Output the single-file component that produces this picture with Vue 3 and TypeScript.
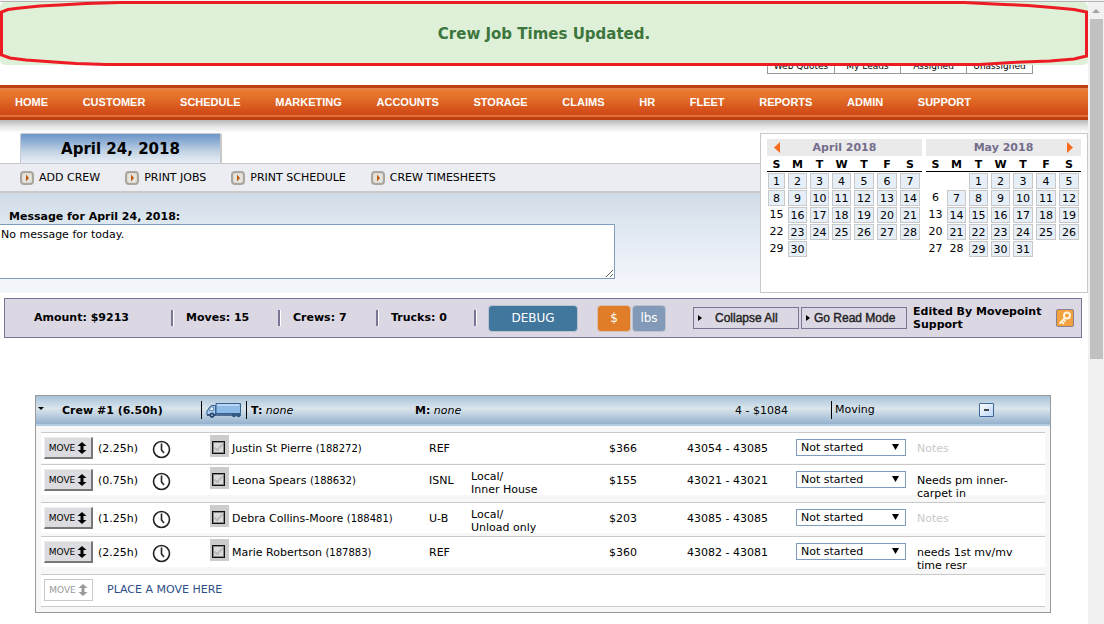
<script setup lang="ts">
interface Month {
  name: string
  offset: number
  days: number
  plain: number[]
  arrow: 'prev' | 'next'
}
interface Move {
  hours: string
  customer: string
  id: string
  code: string
  location: string[]
  amount: string
  range: string
  notes: string
}

const tabs = ['Web Quotes', 'My Leads', 'Assigned', 'Unassigned']
const menu = ['HOME', 'CUSTOMER', 'SCHEDULE', 'MARKETING', 'ACCOUNTS', 'STORAGE', 'CLAIMS', 'HR', 'FLEET', 'REPORTS', 'ADMIN', 'SUPPORT']
const actions = ['ADD CREW', 'PRINT JOBS', 'PRINT SCHEDULE', 'CREW TIMESHEETS']
const weekdays = ['S', 'M', 'T', 'W', 'T', 'F', 'S']
const months: Month[] = [
  { name: 'April 2018', offset: 0, days: 30, plain: [15, 22, 29], arrow: 'prev' },
  { name: 'May 2018', offset: 2, days: 31, plain: [6, 13, 20, 27, 28], arrow: 'next' },
]
const moves: Move[] = [
  { hours: '(2.25h)', customer: 'Justin St Pierre', id: '(188272)', code: 'REF', location: [], amount: '$366', range: '43054 - 43085', notes: '' },
  { hours: '(0.75h)', customer: 'Leona Spears', id: '(188632)', code: 'ISNL', location: ['Local/', 'Inner House'], amount: '$155', range: '43021 - 43021', notes: 'Needs pm inner-carpet in' },
  { hours: '(1.25h)', customer: 'Debra Collins-Moore', id: '(188481)', code: 'U-B', location: ['Local/', 'Unload only'], amount: '$203', range: '43085 - 43085', notes: '' },
  { hours: '(2.25h)', customer: 'Marie Robertson', id: '(187883)', code: 'REF', location: [], amount: '$360', range: '43082 - 43081', notes: 'needs 1st mv/mv time resr' },
]

function weeks(m: Month): (number | null)[][] {
  const rows: (number | null)[][] = []
  for (let start = 1 - m.offset; start <= m.days; start += 7) {
    rows.push(Array.from({ length: 7 }, (_, i) => {
      const day = start + i
      return day >= 1 && day <= m.days ? day : null
    }))
  }
  return rows
}
</script>

<template>
  <div class="page">
    <main class="content">
      <header class="top">
        <nav class="tabs" aria-label="Leads">
          <a v-for="t in tabs" :key="t" href="#">{{ t }}</a>
        </nav>
        <div class="banner" role="status">
          Crew Job Times Updated.
          <svg class="mark mark-left" viewBox="0 0 124 66" aria-hidden="true">
            <path d="M124 2.500H120L86 3.500L60 5L40 6L20 8L8 9.500L1.500 12V55L10 58L26 60L54 62L76 63.500L106 64.500H124" />
          </svg>
          <span class="mark-lines"></span>
          <svg class="mark mark-right" viewBox="0 0 124 66" aria-hidden="true">
            <path d="M0 2.500L20 3.500L40 4.500L64 5.500L88 7.500L110 9.500L122.500 12V56L110 59L86 61L48 62.500L16 64.500H0" />
          </svg>
        </div>
      </header>

      <nav class="menu" aria-label="Main">
        <a v-for="m in menu" :key="m" href="#">{{ m }}</a>
      </nav>
      <div class="menu-shadow"></div>

      <section class="day">
        <div class="day-main">
          <h1 class="date">April 24, 2018</h1>
          <div class="actions">
            <a v-for="a in actions" :key="a" href="#">
              <svg width="14" height="14" viewBox="0 0 14 14" aria-hidden="true">
                <rect x="1" y="1" width="12" height="12" rx="3" fill="#dedad4" stroke="#aaa69f" stroke-width="2" />
                <rect x="3" y="3" width="8" height="8" fill="#e6e2dc" />
                <path d="M6 3.500V10.500L9 7Z" fill="#bd5b12" />
              </svg>
              {{ a }}
            </a>
          </div>
          <div class="message">
            <label for="message">Message for April 24, 2018:</label>
            <textarea id="message">No message for today.</textarea>
          </div>
        </div>

        <div class="calendars">
          <div v-for="m in months" :key="m.name" class="month">
            <div class="month-head">
              <button type="button" :class="['arrow', m.arrow]" :aria-label="m.arrow === 'prev' ? 'Previous month' : 'Next month'"></button>
              {{ m.name }}
            </div>
            <table>
              <thead>
                <tr><th v-for="(w, i) in weekdays" :key="i" scope="col">{{ w }}</th></tr>
              </thead>
              <tbody>
                <tr v-for="(week, r) in weeks(m)" :key="r">
                  <td v-for="(d, i) in week" :key="i">
                    <a v-if="d" href="#" :class="{ plain: m.plain.includes(d) }">{{ d }}</a>
                  </td>
                </tr>
              </tbody>
            </table>
          </div>
        </div>
      </section>

      <section class="summary">
        <span class="stat first">Amount: $9213</span>
        <span class="stat moves">Moves: 15</span>
        <span class="stat">Crews: 7</span>
        <span class="stat">Trucks: 0</span>
        <button type="button" class="pill debug">DEBUG</button>
        <button type="button" class="pill money">$</button>
        <button type="button" class="pill weight">lbs</button>
        <button type="button" class="flat collapse"><i></i><span>Collapse All</span></button>
        <button type="button" class="flat"><i></i><span>Go Read Mode</span></button>
        <span class="edited">Edited By Movepoint Support</span>
        <button type="button" class="key" aria-label="Permissions">
          <svg width="16" height="16" viewBox="0 0 16 16" aria-hidden="true">
            <circle cx="10" cy="5.500" r="3" fill="none" stroke="#fff3dc" stroke-width="2" />
            <path d="M8 8L3 13M4.500 11.500L6.500 13.500M6.500 9.500L8 11" fill="none" stroke="#fff3dc" stroke-width="1.800" stroke-linecap="round" />
          </svg>
        </button>
      </section>

      <section class="crew">
        <header class="crew-head">
          <span class="caret"></span>
          <b>Crew #1 (6.50h)</b>
          <span class="truck">
            <svg width="36" height="16" viewBox="0 0 36 16" aria-hidden="true">
              <path d="M10 1.500H34.500V11.500H10Z" fill="#8fbbe8" stroke="#356292" />
              <path d="M11 3H33" stroke="#b9d7f3" stroke-width="2" />
              <path d="M1 13V9L4 4.500L6 3.500H9.500V13Z" fill="#a9cbed" stroke="#356292" />
              <path d="M3 8.500L5 5H7.500V8.500Z" fill="#edf5fc" stroke="#4b79a9" stroke-width=".8" />
              <path d="M1 13H35" stroke="#294e77" stroke-width="1.500" />
              <circle cx="6" cy="13.200" r="2.200" fill="#31587f" stroke="#1f3e60" />
              <circle cx="28" cy="13.200" r="2" fill="#31587f" />
              <circle cx="32.500" cy="13.200" r="2" fill="#31587f" />
              <circle cx="6" cy="13.200" r=".8" fill="#cfe0f0" />
            </svg>
          </span>
          <span class="team"><b>T:</b> <em>none</em></span>
          <span><b>M:</b> <em>none</em></span>
          <span>4 - $1084</span>
          <span class="kind">Moving</span>
          <button type="button" class="minus" aria-label="Collapse crew"><i></i></button>
        </header>

        <div class="crew-body">
          <table class="moves-table">
            <colgroup>
              <col class="c-move"><col class="c-hours"><col class="c-clock"><col><col class="c-code">
              <col class="c-loc"><col class="c-amount"><col class="c-range"><col class="c-status"><col class="c-notes">
            </colgroup>
            <tbody>
              <tr v-for="(m, i) in moves" :key="m.id">
                <td class="tool">
                  <button type="button" class="move">
                    MOVE
                    <svg width="10" height="12" viewBox="0 0 10 12" aria-hidden="true"><path d="M5 0L9.500 4H6.500V8H9.500L5 12L.5 8H3.500V4H.5Z" /></svg>
                  </button>
                </td>
                <td>{{ m.hours }}</td>
                <td class="clock">
                  <svg width="19" height="19" viewBox="0 0 19 19" aria-hidden="true">
                    <circle cx="9.500" cy="9.500" r="8" fill="#fff" stroke="#222" stroke-width="1.600" />
                    <path d="M9.500 3.500V10L12 13" fill="none" stroke="#222" stroke-width="1.600" />
                  </svg>
                </td>
                <td class="name">
                  <input :id="'move' + i" type="checkbox" class="tick">
                  <label :for="'move' + i">{{ m.customer }} <small>{{ m.id }}</small></label>
                </td>
                <td>{{ m.code }}</td>
                <td class="loc"><div v-for="l in m.location" :key="l">{{ l }}</div></td>
                <td>{{ m.amount }}</td>
                <td>{{ m.range }}</td>
                <td class="status">
                  <div class="select">
                    <select :aria-label="'Status of ' + m.customer">
                      <option>Not started</option>
                      <option>Started</option>
                      <option>Finished</option>
                    </select>
                  </div>
                </td>
                <td :class="['notes', { empty: !m.notes }]">{{ m.notes || 'Notes' }}</td>
              </tr>
            </tbody>
          </table>
          <div class="place">
            <button type="button" class="move off" disabled>
              MOVE
              <svg width="10" height="12" viewBox="0 0 10 12" aria-hidden="true"><path d="M5 0L9.500 4H6.500V8H9.500L5 12L.5 8H3.500V4H.5Z" /></svg>
            </button>
            <a href="#">PLACE A MOVE HERE</a>
          </div>
        </div>
      </section>
    </main>
    <div class="scrollbar" aria-hidden="true"><i></i><span></span></div>
  </div>
</template>

<style>
body {
  margin: 0;
  background: #fff;
  overflow: hidden;
}
</style>

<style scoped>
* {
  box-sizing: border-box;
}
.page {
  display: flex;
  min-height: 100vh;
  border-top: 1px solid #f2f2f2;
  box-shadow: inset 0 1px 0 #b3b3b3;
  font: 11px/13px "DejaVu Sans", Verdana, sans-serif;
  color: #000;
}
a {
  color: inherit;
  text-decoration: none;
}
button, select, textarea {
  font: inherit;
  color: inherit;
  margin: 0;
}
button {
  padding: 0;
}
.content {
  flex: 1;
  min-width: 0;
}
.scrollbar {
  width: 16px;
  margin-top: 1px;
  padding: 7px 1px 0 2px;
  background: #f1f1f1;
}
.scrollbar i {
  display: block;
  width: 8px;
  height: 4px;
  margin: 0 0 6px 2px;
  background: #a3a3a3;
  clip-path: polygon(50% 0, 100% 100%, 0 100%);
}
.scrollbar span {
  display: block;
  height: 340px;
  background: #c1c1c1;
}

.top {
  position: relative;
  display: flex;
  justify-content: flex-end;
  align-items: flex-end;
  height: 84px;
  padding: 0 55px 11px 0;
}
.tabs {
  display: flex;
  border: 1px solid #999;
}
.tabs a {
  width: 66px;
  text-align: center;
  font-size: 9px;
  line-height: 14px;
}
.tabs a + a {
  border-left: 1px solid #999;
}
.banner {
  position: absolute;
  inset: 1px 0 auto 0;
  height: 63px;
  border-radius: 5px;
  background: #dff0d8;
  color: #3c763d;
  font-size: 15px;
  font-weight: bold;
  line-height: 64px;
  text-align: center;
}
.mark {
  position: absolute;
  top: -2px;
  width: 124px;
  height: 66px;
  fill: none;
  stroke: #ed1c24;
  stroke-width: 3;
}
.mark-left {
  left: 0;
}
.mark-right {
  right: 0;
}
.mark-lines {
  position: absolute;
  inset: -1px 123px -1px 123px;
  border: solid #ed1c24;
  border-width: 3px 0;
}

.menu {
  display: flex;
  justify-content: space-between;
  height: 35px;
  padding: 0 117px 0 15px;
  border: solid #bd3f11;
  border-width: 3px 0;
  background: linear-gradient(#e68142 0 2px, #e8792d 3px, #e4702a 9px, #d04615 27px, #e36f35 27px);
  color: #fff;
  font: bold 11px/28px "Liberation Sans", Arial, sans-serif;
}
.menu-shadow {
  height: 13px;
  background: linear-gradient(#b9b9b9, #e4e4e4 50%, #fff);
}

.day {
  display: flex;
  height: 160px;
  margin-bottom: 5px;
}
.day-main {
  display: flex;
  flex-direction: column;
  flex: 1;
}
.date {
  width: 202px;
  height: 30px;
  margin: 0 0 0 20px;
  border: 1px solid #c7ccd4;
  border-right: 2px solid #c8c8c8;
  border-bottom: 0;
  border-radius: 2px 2px 0 0;
  background: linear-gradient(#6f97c9, #7fa3cf 15%, #c2d3e4 60%, #e9eff5);
  font-size: 15px;
  line-height: 30px;
  text-align: center;
}
.actions {
  display: flex;
  align-items: center;
  gap: 25px;
  height: 30px;
  padding-left: 20px;
  border-top: 1px solid #c9c9c9;
  border-bottom: 2px solid #c9c9c9;
  background: #ecedf3;
}
.actions a {
  display: flex;
  align-items: center;
  gap: 5px;
}
.message {
  flex: 1;
  background: linear-gradient(#d0dbe8, #dde7ef 30%, #ebeff7 65%, #f2f5fa 90%);
}
.message label {
  display: block;
  padding: 17px 0 1px 9px;
  font-weight: bold;
}
.message textarea {
  display: block;
  width: 615px;
  max-width: 100%;
  height: 55px;
  padding: 3px 1px;
  border: 1px solid #7f9dbf;
  border-left: 0;
  border-radius: 0;
  background: #fff;
}

.calendars {
  display: flex;
  gap: 4px;
  width: 328px;
  padding: 5px 6px;
  border: 1px solid #c9c9c9;
  background: #fff;
}
.month {
  flex: 1;
}
.month-head {
  display: flex;
  align-items: center;
  justify-content: center;
  position: relative;
  height: 17px;
  background: #eaeaea;
  color: #746d8c;
  font-weight: bold;
}
.arrow {
  position: absolute;
  top: 3px;
  width: 6px;
  height: 11px;
  border: 0;
  background: #f86c1b;
}
.prev {
  left: 7px;
  clip-path: polygon(0 50%, 100% 0, 100% 100%);
}
.next {
  right: 8px;
  clip-path: polygon(100% 50%, 0 0, 0 100%);
}
.month table {
  width: 100%;
  border-spacing: 0;
  table-layout: fixed;
}
.month th {
  width: 22px;
  height: 16px;
  padding: 2px 1px 0 0;
  border-bottom: 1px solid #000;
  line-height: 13px;
}
.month th:first-child {
  width: 20px;
}
.month th:nth-child(n+5) {
  width: 23px;
}
.month td {
  height: 17px;
  padding: 1px 2px 0 1px;
  text-align: center;
}
.month td a {
  display: block;
  height: 16px;
  border: 1px solid #c8c8c8;
  background: #e6eef8;
  line-height: 15px;
}
.month td .plain {
  border-color: transparent;
  background: none;
  line-height: 13px;
}

.summary {
  display: flex;
  align-items: center;
  height: 40px;
  margin: 0 6px 0 4px;
  border: 1px solid #7a7595;
  background: #dbd7e3;
  font-weight: bold;
}
.stat {
  width: 98px;
  height: 16px;
  padding-left: 12px;
  border-right: 1px solid #fff;
  box-shadow: inset -2px 0 0 #7a7595;
  line-height: 16px;
  white-space: nowrap;
}
.first {
  width: 169px;
  padding-left: 29px;
}
.moves {
  width: 107px;
}
.pill {
  height: 27px;
  border: 1px solid #b9c4d0;
  border-radius: 4px;
  color: #fff;
  font-size: 12px;
  font-weight: normal;
}
.debug {
  width: 90px;
  margin: 0 19px 0 11px;
  background: #41769d;
}
.money {
  width: 34px;
  margin-right: 1px;
  border-color: #d6c0ae;
  background: #e17d29;
}
.weight {
  width: 34px;
  margin-right: 27px;
  background: #8299b8;
}
.flat {
  display: flex;
  align-items: center;
  width: 106px;
  height: 22px;
  margin-right: 2px;
  padding: 0 4px;
  border: 1px solid #7a7595;
  background: #dbd7e3;
  color: #222;
  font: 500 12px/14px "Liberation Sans", Arial, sans-serif;
  -webkit-text-stroke: 0.4px #222;
  white-space: nowrap;
}
.flat i {
  width: 4px;
  height: 6px;
  margin-right: 4px;
  background: #000;
  clip-path: polygon(0 0, 100% 50%, 0 100%);
}
.collapse i {
  margin-right: 13px;
}
.edited {
  flex: 1;
  max-width: 140px;
  margin-left: 4px;
}
.key {
  width: 18px;
  height: 18px;
  margin: 0 7px 0 auto;
  border: 1px solid #8b7f8e;
  border-radius: 2px;
  background: #f3a13f;
}
.key svg {
  display: block;
}

.crew {
  margin: 57px 37px 0 35px;
  border: 1px solid #999;
  background: #f7f7f7;
}
.crew-head {
  display: grid;
  grid-template-columns: 26px 139px 46px 168px 1fr 96px 148px 71px;
  align-items: center;
  height: 30px;
  padding-bottom: 2px;
  background: linear-gradient(#a8c3da, #dae5ec 42%, #95b2cf 93%, #b4cde1 94%);
}
.caret {
  width: 6px;
  height: 3px;
  margin: 0 0 3px 2px;
  background: #000;
  clip-path: polygon(0 0, 100% 0, 50% 100%);
}
.truck {
  display: flex;
  align-items: center;
  justify-content: center;
  height: 18px;
  border: solid #000;
  border-width: 0 1px;
}
.team {
  padding-left: 4px;
}
.kind {
  height: 18px;
  padding-left: 3px;
  border-left: 1px solid #000;
  line-height: 18px;
}
.minus {
  display: flex;
  align-items: center;
  justify-content: center;
  width: 15px;
  height: 14px;
  border: 1px solid #3f6699;
  border-radius: 1px;
  background: linear-gradient(135deg, #fff, #b9d4f5);
}
.minus i {
  width: 5px;
  height: 2px;
  background: #444;
}

.crew-body {
  padding: 6px 5px 5px;
}
.moves-table {
  width: 100%;
  border-spacing: 0;
  table-layout: fixed;
}
.c-move { width: 57px; }
.c-hours { width: 54px; }
.c-clock { width: 58px; }
.c-code { width: 42px; }
.c-loc { width: 138px; }
.c-amount { width: 78px; }
.c-range { width: 109px; }
.c-status { width: 121px; }
.c-notes { width: 128px; }
.moves-table td {
  height: 32px;
  padding: 9px 0 2px;
  border-top: 1px solid #c9c9c9;
  background: linear-gradient(#fff, #fff) 0 0 / 100% 30px no-repeat;
  vertical-align: top;
}
.moves-table .tool {
  padding: 4px 0 0 3px;
}
.moves-table .clock, .moves-table .status {
  padding: 6px 0 0;
}
.clock svg {
  display: block;
  margin-top: 1px;
}
.moves-table .name {
  display: flex;
  align-items: flex-start;
  gap: 3px;
  padding: 2px 0 0;
}
.name label {
  padding-top: 7px;
}
.moves-table .loc {
  padding-top: 5px;
}
.moves-table .notes {
  padding-right: 20px;
}
.moves-table .empty {
  color: #c9c9c9;
}
small {
  font-size: 10px;
}
.tick {
  display: block;
  flex: none;
  appearance: none;
  width: 19px;
  height: 22px;
  margin: 0;
  padding: 6px 3px 3px 2px;
  background: #ccc;
}
.tick::before {
  content: "";
  display: block;
  box-sizing: border-box;
  width: 13px;
  height: 13px;
  border: 1px solid #111;
  box-shadow: inset 0 0 0 1px #888;
  background: #dcdadd;
}
.tick::after {
  content: "";
  display: block;
  box-sizing: border-box;
  width: 5px;
  height: 9px;
  margin: -12px 0 0 4px;
  border: solid #bbb;
  border-width: 0 2px 2px 0;
  transform: rotate(42deg);
}
.move {
  display: flex;
  align-items: center;
  justify-content: center;
  gap: 2px;
  width: 49px;
  height: 22px;
  border: 1px solid #eee;
  border-right: 2px solid #777;
  border-bottom: 2px solid #777;
  background: #dcdbdf;
  font-size: 9px;
  line-height: 10px;
}
.move svg {
  fill: #000;
}
.off {
  border: 1px solid #c9c9c9;
  background: #fff;
  color: #999;
}
.off svg {
  fill: #999;
}
.select {
  position: relative;
  width: 110px;
  height: 17px;
}
.select select {
  display: block;
  width: 100%;
  height: 100%;
  padding: 0 16px 0 4px;
  appearance: none;
  border: 1px solid #7f9dbf;
  border-radius: 0;
  background: #fff;
  line-height: 15px;
}
.select::after {
  content: "";
  position: absolute;
  top: 5px;
  right: 7px;
  width: 7px;
  height: 6px;
  background: #000;
  clip-path: polygon(0 0, 100% 0, 50% 100%);
  pointer-events: none;
}
.place {
  display: flex;
  align-items: center;
  gap: 14px;
  height: 33px;
  padding: 0 3px 2px;
  border: solid #c9c9c9;
  border-width: 1px 0;
  background: #fff;
  color: #2d4e86;
}
</style>
